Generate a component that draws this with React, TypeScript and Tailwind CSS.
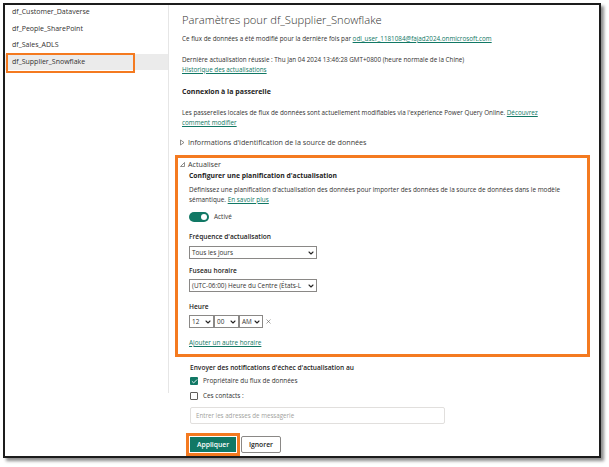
import { ChevronDown, X, Check } from "lucide-react";

const TEAL = "#117865";

const flows = [
  "df_Customer_Dataverse",
  "df_People_SharePoint",
  "df_Sales_ADLS",
  "df_Supplier_Snowflake",
];

function FakeSelect({ value, width }: { value: string; width: string }) {
  return (
    <div
      className={`${width} h-[13px] flex items-center justify-between border border-[#8a8886] bg-white pl-[2px] pr-[1px] text-[6.4px] leading-[10px] text-[#323130]`}
    >
      <span className="whitespace-nowrap">{value}</span>
      <ChevronDown size={8} strokeWidth={3.2} className="shrink-0 text-[#252423]" />
    </div>
  );
}

export default function App() {
  return (
    <div className="w-[609px] h-[467px] bg-white p-[3px] font-['Open_Sans',sans-serif] text-[#323130]">
      <div className="w-[598px] h-[455px] border-2 border-[#1c1c1c] bg-white shadow-[3px_3px_3px_rgba(0,0,0,0.45)] flex overflow-hidden">
        {/* ── Sidebar ── */}
        <div className="w-[164px] h-[389px] shrink-0 border-r border-[#e6e6e6] -mt-[1px]">
          {flows.map((name, i) => {
            const selected = i === flows.length - 1;
            return (
              <div
                key={name}
                className={`relative h-[16.6px] flex items-center pl-[7px] text-[7px] leading-[10px] ${
                  selected ? "bg-[#ebebeb]" : ""
                }`}
              >
                {name}
                {selected && (
                  <span className="absolute left-[1px] -top-[1px] w-[129px] h-[20px] border-2 border-[#f47a20] pointer-events-none" />
                )}
              </div>
            );
          })}
        </div>

        {/* ── Settings ── */}
        <div className="flex-1 pl-[6px] pr-[9px] pt-[8px]">
          <div className="pl-[7px]">
            <h1 className="text-[11.2px] leading-[14px] font-light text-[#323130] whitespace-nowrap">
              Paramètres pour df_Supplier_Snowflake
            </h1>
            <p className="mt-[7px] text-[6.3px] leading-[10px] whitespace-nowrap">
              Ce flux de données a été modifié pour la dernière fois par{" "}
              <span className="underline text-[#117865]">odl_user_1181084@fajad2024.onmicrosoft.com</span>
            </p>
            <p className="mt-[11px] text-[6.3px] leading-[10px] whitespace-nowrap">
              Dernière actualisation réussie : Thu Jan 04 2024 13:46:28 GMT+0800 (heure normale de la Chine)
            </p>
            <p className="text-[6.3px] leading-[10px] underline text-[#117865]">Historique des actualisations</p>

            <h2 className="mt-[12px] text-[7px] leading-[10px] font-bold text-[#252423]">
              Connexion à la passerelle
            </h2>
            <p className="mt-[11px] text-[6.3px] leading-[9.5px] whitespace-nowrap">
              Les passerelles locales de flux de données sont actuellement modifiables via l'expérience Power Query Online.{" "}
              <span className="underline text-[#117865]">Découvrez</span>
              <br />
              <span className="underline text-[#117865]">comment modifier</span>
            </p>
          </div>

          <div className="mt-[10px] flex items-center gap-[2px] h-[10px] text-[7.2px] leading-[10px] text-[#3b3a39]">
            <svg width="7" height="7" viewBox="0 0 7 7" className="ml-[4px]">
              <path d="M1.5 1 L5 3.5 L1.5 6 Z" fill="none" stroke="#605e5c" strokeWidth="0.7" />
            </svg>
            <span>Informations d'identification de la source de données</span>
          </div>

          {/* ── Refresh schedule (highlighted) ── */}
          <div className="mt-[8px] border-[3px] border-[#f47a20] pt-[1px] pb-[6px] pl-[11px]">
            <div className="-ml-[10px] flex items-center gap-[2px] h-[10px] text-[7.2px] leading-[10px] text-[#3b3a39]">
              <svg width="7" height="7" viewBox="0 0 7 7">
                <path d="M5.5 1.5 L5.5 5.5 L1.5 5.5 Z" fill="none" stroke="#605e5c" strokeWidth="0.7" />
              </svg>
              <span>Actualiser</span>
            </div>
            <h3 className="mt-[2px] text-[6.8px] leading-[10px] font-bold text-[#252423]">
              Configurer une planification d'actualisation
            </h3>
            <p className="mt-[4px] text-[6.4px] leading-[10px] whitespace-nowrap">
              Définissez une planification d'actualisation des données pour importer des données de la source de données dans le modèle
              <br />
              sémantique. <span className="underline text-[#117865]">En savoir plus</span>
            </p>

            <div className="mt-[7px] flex items-center gap-[5px] h-[10px]">
              <div className="w-[20px] h-[10px] rounded-full flex items-center justify-end pr-[2px]" style={{ backgroundColor: TEAL }}>
                <div className="w-[6px] h-[6px] rounded-full bg-white" />
              </div>
              <span className="text-[6.4px] leading-[10px]">Activé</span>
            </div>

            <p className="mt-[10px] text-[6.6px] leading-[10px] font-semibold text-[#252423]">Fréquence d'actualisation</p>
            <div className="mt-[4px]">
              <FakeSelect value="Tous les jours" width="w-[128px]" />
            </div>

            <p className="mt-[7px] text-[6.6px] leading-[10px] font-semibold text-[#252423]">Fuseau horaire</p>
            <div className="mt-[3px]">
              <FakeSelect value="(UTC-06:00) Heure du Centre (États-L" width="w-[128px]" />
            </div>

            <p className="mt-[10px] text-[6.6px] leading-[10px] font-semibold text-[#252423]">Heure</p>
            <div className="mt-[3px] flex items-center">
              <FakeSelect value="12" width="w-[25px]" />
              <FakeSelect value="00" width="w-[25px]" />
              <FakeSelect value="AM" width="w-[24px]" />
              <X size={7} strokeWidth={2} className="ml-[2px] text-[#605e5c]" />
            </div>

            <p className="mt-[10px] text-[6.4px] leading-[10px] underline text-[#117865]">Ajouter un autre horaire</p>
          </div>

          {/* ── Notifications ── */}
          <div className="pl-[15px]">
            <p className="mt-[6px] text-[6.6px] leading-[10px] font-semibold text-[#252423]">
              Envoyer des notifications d'échec d'actualisation au
            </p>
            <div className="mt-[3px] flex items-center gap-[5px] h-[10px]">
              <div className="w-[8px] h-[8px] rounded-[1px] flex items-center justify-center" style={{ backgroundColor: TEAL }}>
                <Check size={7} strokeWidth={3} className="text-white" />
              </div>
              <span className="text-[6.4px] leading-[10px]">Propriétaire du flux de données</span>
            </div>
            <div className="mt-[5px] flex items-center gap-[5px] h-[10px]">
              <div className="w-[8px] h-[8px] rounded-[1px] border border-[#605e5c] bg-white" />
              <span className="text-[6.4px] leading-[10px]">Ces contacts :</span>
            </div>
            <div className="mt-[6px] w-[255px] h-[17px] border border-[#e1dfdd] rounded-[2px] flex items-center pl-[5px] text-[6.2px] leading-[10px] text-[#a19f9d]">
              Entrer les adresses de messagerie
            </div>

            <div className="mt-[12px] flex items-center gap-[4px]">
              <button
                className="w-[48px] h-[17px] ml-[-1px] border border-white outline-[3px] outline-solid outline-[#f47a20] text-white text-[6.8px] font-semibold leading-[10px]"
                style={{ backgroundColor: TEAL }}
              >
                Appliquer
              </button>
              <button className="w-[40px] h-[17px] border border-[#8a8886] rounded-[2px] bg-white text-[6.8px] font-semibold leading-[10px] text-[#252423]">
                Ignorer
              </button>
            </div>
          </div>
        </div>
      </div>
    </div>
  );
}
